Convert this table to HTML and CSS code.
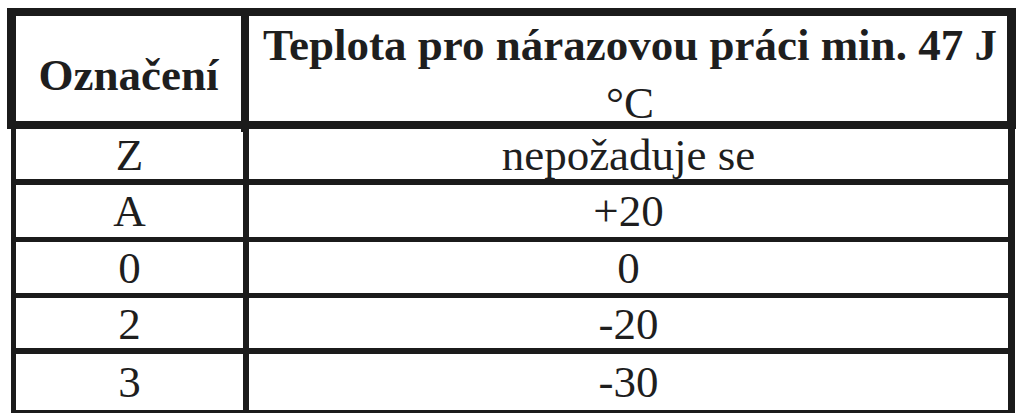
FILE: index.html
```html
<!DOCTYPE html>
<html lang="cs">
<head>
<meta charset="utf-8">
<title>Označení</title>
<link rel="stylesheet" href="styles.css">
</head>
<body>
<div class="sheet">
  <div class="head">
    <div class="hcell hfirst"><span class="bold">Označení</span></div>
    <div class="hcell"><span class="htext"><span class="bold">Teplota pro nárazovou práci min. 47 J</span><br>°C</span></div>
  </div>
  <div class="rows">
    <div class="row"><div class="cell first">Z</div><div class="cell">nepožaduje se</div></div>
    <div class="row"><div class="cell first">A</div><div class="cell">+20</div></div>
    <div class="row"><div class="cell first">0</div><div class="cell">0</div></div>
    <div class="row"><div class="cell first">2</div><div class="cell">-20</div></div>
    <div class="row"><div class="cell first">3</div><div class="cell">-30</div></div>
  </div>
</div>
</body>
</html>
```
FILE: styles.css
```css
html, body {
  margin: 0;
  padding: 0;
  background: #ffffff;
}
body {
  font-family: "Liberation Serif", "Times New Roman", serif;
  font-size: 45px;
  color: #1e1e1e;
  overflow: hidden;
  height: 413px;
}
.sheet {
  padding-top: 8px;
}
.head {
  box-sizing: border-box;
  margin-left: 7px;
  width: 1009px;
  height: 121px;
  border-style: solid;
  border-color: #1b1b1b;
  border-width: 8px 9px 8px 9px;
  display: grid;
  grid-template-columns: 233px 1fr;
}
.hcell {
  display: flex;
  align-items: center;
  justify-content: center;
  text-align: center;
  white-space: nowrap;
  min-width: 0;
}
.hfirst {
  border-right: 8px solid #1b1b1b;
  padding-top: 2px;
}
.htext {
  line-height: 58px;
  padding-left: 4px;
}
.bold {
  font-weight: bold;
}
.rows {
  box-sizing: border-box;
  margin-left: 11px;
  width: 1004px;
  border-left: 5px solid #1b1b1b;
  border-right: 7px solid #1b1b1b;
}
.row {
  box-sizing: border-box;
  display: grid;
  grid-template-columns: 233px 1fr;
  height: 56px;
  border-bottom: 6px solid #1b1b1b;
}
.row:nth-child(2) {
  height: 57px;
  border-bottom-width: 5px;
}
.row:nth-child(3) {
  border-bottom-width: 5px;
}
.row:nth-child(5) {
  height: 62px;
}
.cell {
  display: flex;
  align-items: center;
  justify-content: center;
  white-space: nowrap;
}
.first {
  border-right: 6px solid #1b1b1b;
}
```
